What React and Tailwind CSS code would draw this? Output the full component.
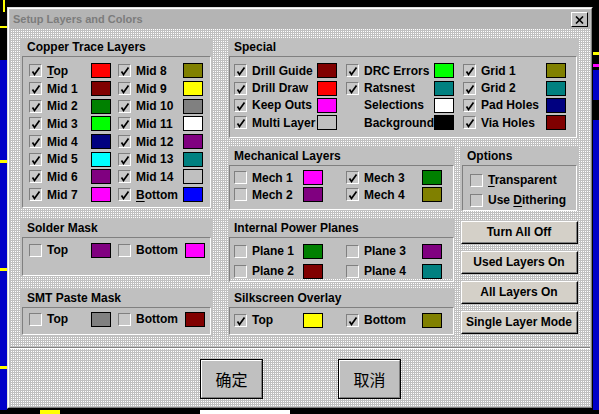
import React from 'react';

const FONT = "font-['Liberation_Sans',Arial,sans-serif]";

const Box = ({ checked }) => (
  <span className="w-[13px] h-[13px] shrink-0 flex items-center justify-center bg-[#c8c8c8] border border-t-[#808080] border-l-[#808080] border-b-white border-r-white">
    {checked && (
      <svg width="11" height="11" viewBox="0 0 11 11">
        <path d="M2.5 6.5 L4.5 9.5 L9.5 2.5" stroke="#000" strokeWidth="1.7" fill="none" />
      </svg>
    )}
  </span>
);

const Swatch = ({ color }) => (
  <span className="w-[20px] h-[15px] shrink-0 border border-black" style={{ backgroundColor: color }} />
);

const Label = ({ text, u }) => {
  if (u === undefined) return text;
  return (
    <>
      {text.slice(0, u)}
      <span className="underline underline-offset-2">{text[u]}</span>
      {text.slice(u + 1)}
    </>
  );
};

// one layer: checkbox, name and colour chip
const Item = ({ checked, label, u, color, w, noBox }) => (
  <div className="flex items-center">
    {noBox ? <span className="w-[13px] h-[13px] shrink-0" /> : <Box checked={checked} />}
    <span className={`ml-[5px] text-[12px] font-bold text-black whitespace-nowrap ${w}`}>
      <Label text={label} u={u} />
    </span>
    {color && <Swatch color={color} />}
  </div>
);

const Group = ({ title, className, inner, children }) => (
  <div className={`bg-[#c0c0c0] flex flex-col ${className}`}>
    <div className="h-[18px] leading-[18px] pl-[6px] text-[12px] font-bold text-black">{title}</div>
    <div className={`flex-1 mx-[1px] mb-[1px] border border-t-[#808080] border-l-[#808080] border-b-white border-r-white ${inner}`}>
      {children}
    </div>
  </div>
);

const Btn = ({ children }) => (
  <div className="h-[23px] border border-t-white border-l-white border-b-black border-r-black bg-[#d4d0c8]">
    <div className="h-full border-b border-r border-[#808080] flex items-center justify-center text-[12px] font-bold text-black">
      {children}
    </div>
  </div>
);

const BigBtn = ({ children }) => (
  <div className="w-[63px] h-[40px] border border-black">
    <div className="h-full border border-t-white border-l-white border-b-[#808080] border-r-[#808080] bg-[#c0c0c0] flex items-center justify-center text-[16px] text-black font-['Noto_Sans_CJK_SC',sans-serif]">
      {children}
    </div>
  </div>
);

const copper = [
  ['Top', '#ff0000', 0, 'Mid 8', '#808000'],
  ['Mid 1', '#800000', undefined, 'Mid 9', '#ffff00'],
  ['Mid 2', '#008000', undefined, 'Mid 10', '#808080'],
  ['Mid 3', '#00ff00', undefined, 'Mid 11', '#ffffff'],
  ['Mid 4', '#000080', undefined, 'Mid 12', '#800080'],
  ['Mid 5', '#00ffff', undefined, 'Mid 13', '#008080'],
  ['Mid 6', '#800080', undefined, 'Mid 14', '#c0c0c0'],
  ['Mid 7', '#ff00ff', undefined, 'Bottom', '#0000ff'],
];

const special = [
  ['Drill Guide', '#800000', 'DRC Errors', '#00ff00', false, 'Grid 1', '#808000'],
  ['Drill Draw', '#ff0000', 'Ratsnest', '#008080', false, 'Grid 2', '#008080'],
  ['Keep Outs', '#ff00ff', 'Selections', '#ffffff', true, 'Pad Holes', '#000080'],
  ['Multi Layer', '#c0c0c0', 'Background', '#000000', true, 'Via Holes', '#800000'],
];

export default function App() {
  return (
    <div className={`relative w-[599px] h-[414px] bg-black overflow-hidden ${FONT}`}>
      {/* board behind the dialog */}
      <div className="absolute left-0 top-[60px] w-[7px] h-[350px] bg-[#0000c8]" />
      <div className="absolute left-[3px] top-0 w-[2px] h-[12px] bg-[#ffff00]" />
      <div className="absolute left-0 top-[26px] w-[7px] h-[2px] bg-[#ffff00]" />
      <div className="absolute left-0 top-[160px] w-[7px] h-[3px] bg-[#ffff00]" />
      <div className="absolute left-0 top-[268px] w-[7px] h-[3px] bg-[#ffff00]" />
      <div className="absolute left-0 top-[366px] w-[7px] h-[3px] bg-[#ffff00]" />
      <div className="absolute right-0 top-[52px] w-[6px] h-[3px] bg-[#ffff00]" />
      <div className="absolute right-0 top-[64px] w-[6px] h-[3px] bg-[#ff00ff]" />
      <div className="absolute right-0 top-[70px] w-[6px] h-[30px] bg-[#0000c8]" />
      <div className="absolute right-0 top-[120px] w-[6px] h-[290px] bg-[#0000c8]" />
      <div className="absolute left-[200px] top-[410px] w-[90px] h-[4px] bg-white" />
      <div className="absolute left-[40px] top-[410px] w-[20px] h-[4px] bg-[#ffff00]" />

      {/* dialog window */}
      <div className="ml-[7px] mt-[7px] w-[586px] h-[402px] border border-t-[#dfdfdf] border-l-[#dfdfdf] border-b-black border-r-black">
        <div className="h-full border border-t-white border-l-white border-b-[#808080] border-r-[#808080] bg-[#c0c0c0] p-[1px] flex flex-col">
          <div className="h-[19px] shrink-0 bg-[#b4b4b4] flex items-center justify-between pl-[3px] pr-[2px]">
            <span className="text-[11px] font-bold text-[#7c7c7c]">Setup Layers and Colors</span>
            <div className="w-[17px] h-[15px] border border-t-white border-l-white border-b-black border-r-black bg-[#c0c0c0] flex items-center justify-center">
              <svg width="9" height="8" viewBox="0 0 9 8">
                <path d="M1 0.5 L8 7.5 M8 0.5 L1 7.5" stroke="#000" strokeWidth="1.6" />
              </svg>
            </div>
          </div>

          <div className="flex-1 flex flex-col bg-[#c0c0c0] bg-[conic-gradient(#ffffff_0_25%,#c0c0c0_0_100%)] [background-size:2px_2px]">
            <div className="flex gap-[16px] pl-[11px] pt-[9px]">
              {/* left column */}
              <div className="w-[191px] flex flex-col">
                <Group title="Copper Trace Layers" className="h-[171px]" inner="pl-[6px] pt-[5px]">
                  {copper.map(([a, ca, ua, b, cb]) => (
                    <div key={a} className="h-[17.7px] flex items-center gap-[7px]">
                      <Item checked label={a} u={ua} color={ca} w="w-[44px]" />
                      <Item checked label={b} u={b === 'Bottom' ? 0 : undefined} color={cb} w="w-[47px]" />
                    </div>
                  ))}
                </Group>
                <Group title="Solder Mask" className="mt-[10px] h-[58px]" inner="pl-[6px] pt-[3px]">
                  <div className="h-[18px] flex items-center gap-[7px]">
                    <Item label="Top" color="#800080" w="w-[44px]" />
                    <Item label="Bottom" color="#ff00ff" w="w-[49px]" />
                  </div>
                </Group>
                <Group title="SMT Paste Mask" className="mt-[12px] h-[47px]" inner="pl-[6px] pt-[2px]">
                  <div className="h-[18px] flex items-center gap-[7px]">
                    <Item label="Top" color="#808080" w="w-[44px]" />
                    <Item label="Bottom" color="#800000" w="w-[49px]" />
                  </div>
                </Group>
              </div>

              {/* right area */}
              <div className="w-[350px] flex flex-col">
                <Group title="Special" className="h-[101px]" inner="pl-[4px] pt-[5px]">
                  {special.map(([a, ca, b, cb, nb, c, cc]) => (
                    <div key={a} className="h-[17.4px] flex items-center gap-[9px]">
                      <Item checked label={a} color={ca} w="w-[65px]" />
                      <Item checked label={b} color={cb} noBox={nb} w="w-[70px]" />
                      <Item checked label={c} color={cc} w="w-[65px]" />
                    </div>
                  ))}
                </Group>

                <div className="mt-[8px] flex gap-[6px]">
                  <Group title="Mechanical Layers" className="w-[227px] h-[64px]" inner="pl-[4px] pt-[3px]">
                    <div className="h-[17px] flex items-center gap-[23px]">
                      <Item label="Mech 1" color="#ff00ff" w="w-[51px]" />
                      <Item checked label="Mech 3" color="#008000" w="w-[58px]" />
                    </div>
                    <div className="h-[17px] flex items-center gap-[23px]">
                      <Item label="Mech 2" color="#800080" w="w-[51px]" />
                      <Item checked label="Mech 4" color="#808000" w="w-[58px]" />
                    </div>
                  </Group>
                  <Group title="Options" className="w-[117px] h-[64px]" inner="pl-[7px] pt-[4px]">
                    <div className="h-[20px] flex items-center">
                      <Item label="Transparent" u={0} />
                    </div>
                    <div className="h-[20px] flex items-center">
                      <Item label="Use Dithering" u={4} />
                    </div>
                  </Group>
                </div>

                <div className="mt-[8px] flex gap-[6px]">
                  <div className="w-[227px] flex flex-col">
                    <Group title="Internal Power Planes" className="h-[60px]" inner="pl-[4px] pt-[3px]">
                      <div className="h-[20px] flex items-center gap-[23px]">
                        <Item label="Plane 1" color="#008000" w="w-[51px]" />
                        <Item label="Plane 3" color="#800080" w="w-[58px]" />
                      </div>
                      <div className="h-[20px] flex items-center gap-[23px]">
                        <Item label="Plane 2" color="#800000" w="w-[51px]" />
                        <Item label="Plane 4" color="#008080" w="w-[58px]" />
                      </div>
                    </Group>
                    <Group title="Silkscreen Overlay" className="mt-[10px] h-[47px]" inner="pl-[4px] pt-[2px]">
                      <div className="h-[20px] flex items-center gap-[23px]">
                        <Item checked label="Top" color="#ffff00" w="w-[51px]" />
                        <Item checked label="Bottom" color="#808000" w="w-[58px]" />
                      </div>
                    </Group>
                  </div>
                  <div className="w-[117px] pt-[2px] flex flex-col gap-[7px]">
                    <Btn>Turn All Off</Btn>
                    <Btn>Used Layers On</Btn>
                    <Btn>All Layers On</Btn>
                    <Btn>Single Layer Mode</Btn>
                  </div>
                </div>
              </div>
            </div>

            <div className="mt-[11px] h-[2px] border-t border-[#808080] border-b border-b-white" />

            <div className="mt-[10px] flex pl-[190px] gap-[75px]">
              <BigBtn>确定</BigBtn>
              <BigBtn>取消</BigBtn>
            </div>
          </div>
        </div>
      </div>
    </div>
  );
}
